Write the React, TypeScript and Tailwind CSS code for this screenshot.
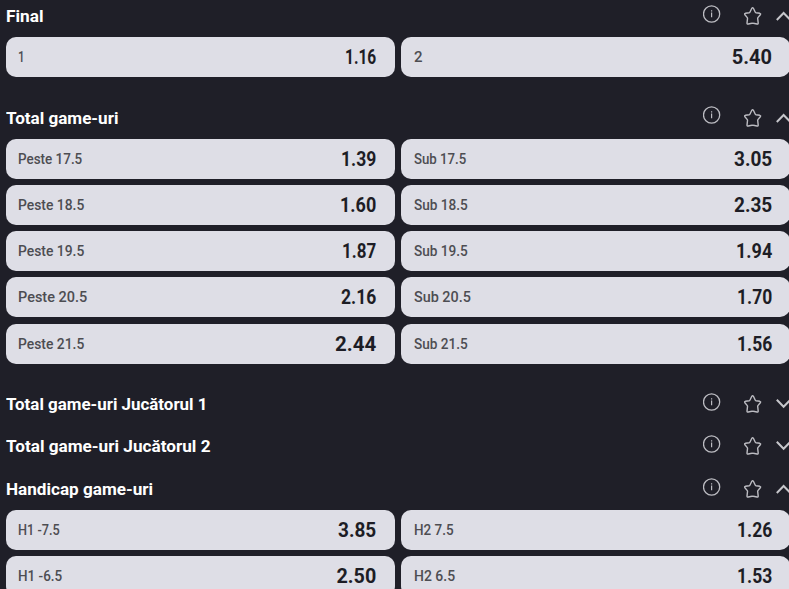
import { useLayoutEffect, useRef, useState } from "react";
import clsx from "clsx";

type Cell = [label: string, labelWidth: number, odds: string, oddsWidth: number];
type Market = { title: string; width: number; open: boolean; header: string; info: string; rows: [Cell, Cell][] };

const markets: Market[] = [
  {
    title: "Final",
    width: 37.5,
    open: true,
    header: "h-[42px]",
    info: "mb-1",
    rows: [[["1", 7, "1.16", 31], ["2", 9, "5.40", 40]]],
  },
  {
    title: "Total game-uri",
    width: 112.5,
    open: true,
    header: "mt-5 h-[42px]",
    info: "mb-1.5",
    rows: [
      [["Peste 17.5", 64.5, "1.39", 35], ["Sub 17.5", 52, "3.05", 38]],
      [["Peste 18.5", 66.5, "1.60", 36], ["Sub 18.5", 53.5, "2.35", 38]],
      [["Peste 19.5", 66.5, "1.87", 34], ["Sub 19.5", 53.5, "1.94", 36]],
      [["Peste 20.5", 69.5, "2.16", 35], ["Sub 20.5", 56.5, "1.70", 35]],
      [["Peste 21.5", 66.5, "2.44", 41], ["Sub 21.5", 53.5, "1.56", 35]],
    ],
  },
  { title: "Total game-uri Jucătorul 1", width: 201, open: false, header: "mt-[19.48px] h-[42px]", info: "mb-1", rows: [] },
  { title: "Total game-uri Jucătorul 2", width: 204, open: false, header: "h-[42px]", info: "mb-1", rows: [] },
  {
    title: "Handicap game-uri",
    width: 147,
    open: true,
    header: "mt-px h-[42px]",
    info: "mb-1",
    rows: [
      [["H1 -7.5", 41.5, "3.85", 38], ["H2 7.5", 39.5, "1.26", 35]],
      [["H1 -6.5", 44, "2.50", 39.5], ["H2 6.5", 41, "1.53", 35]],
    ],
  },
];

/* Condenses a line of text horizontally so that it fills the given width. */
function Fit({ text, width, right = false }: { text: string; width: number; right?: boolean }) {
  const ref = useRef<HTMLSpanElement>(null);
  const [scale, setScale] = useState(1);
  useLayoutEffect(() => {
    if (ref.current) setScale(width / ref.current.offsetWidth);
  }, [width]);
  return (
    <span
      ref={ref}
      className={clsx("inline-block whitespace-nowrap", right ? "origin-right" : "origin-left")}
      style={{ transform: `scaleX(${scale})` }}
    >
      {text}
    </span>
  );
}

function InfoIcon({ className }: { className: string }) {
  return (
    <svg className={clsx("size-[18px] shrink-0", className)} viewBox="0 0 18 18" fill="none" stroke="#bcbcc2">
      <circle cx="8.6" cy="9" r="8.1" strokeWidth="1.3" />
      <path d="M8.6 7.6v4.7M8.6 5.2v1.2" strokeWidth="1.2" />
    </svg>
  );
}

function StarIcon() {
  return (
    <svg
      className="ml-[23px] size-[18px] shrink-0"
      viewBox="0.4 0 18 18"
      fill="none"
      stroke="#bcbcc2"
      strokeWidth="1.4"
      strokeLinejoin="round"
    >
      <path d="M8.2 1.3Q9 .1 9.8 1.3L11.7 5.2Q11.9 5.6 12.4 5.7L16.2 6.3Q17.5 6.7 16.7 7.7L14.3 10.6Q14 11 14.1 11.6L14.6 16.1Q14.6 17.5 13.4 17L9.7 16.3Q9 16.1 8.3 16.3L4.6 17Q3.4 17.5 3.4 16.1L3.9 11.6Q4 11 3.7 10.6L1.3 7.7Q.5 6.7 1.8 6.3L5.6 5.7Q6.1 5.6 6.3 5.2Z" />
    </svg>
  );
}

function Chevron({ open }: { open: boolean }) {
  return (
    <svg className="ml-[14px] h-[10px] w-4 shrink-0" viewBox="0 0 16 10" fill="none" stroke="#c6c6cb" strokeWidth="2">
      <path d={open ? "M.8 9 7.6 2 14.4 9" : "M.8 .8 7.6 7.8 14.4 .8"} />
    </svg>
  );
}

function OddsButton({ cell, second = false }: { cell: Cell; second?: boolean }) {
  const [label, labelWidth, odds, oddsWidth] = cell;
  return (
    <button
      className={clsx(
        "flex h-10 w-[389px] shrink-0 items-center justify-between rounded-[10px] bg-[#dedee6]",
        second ? "pr-[18px] pl-[13px]" : "pr-[19px] pl-3",
      )}
    >
      <span className="text-[15px] leading-5 font-medium text-[#4d4d52]">
        <Fit text={label} width={labelWidth} />
      </span>
      <span className="text-[20px] leading-6 font-bold text-[#1d1d25]">
        <Fit text={odds} width={oddsWidth} right />
      </span>
    </button>
  );
}

export default function App() {
  return (
    <main className="h-[589px] w-[789px] overflow-hidden bg-[#1f1f28] pl-[6px] font-['Roboto',sans-serif]">
      <div className="-mt-[5px]">
        {markets.map((m) => (
          <section key={m.title}>
            <header className={clsx("flex w-[787px] items-center", m.header)}>
              <h2 className="w-[697px] shrink-0 text-[17px] leading-6 font-bold text-white">
                <Fit text={m.title} width={m.width} />
              </h2>
              <InfoIcon className={m.info} />
              <StarIcon />
              <Chevron open={m.open} />
            </header>
            <div className="flex flex-col gap-[6.14px]">
              {m.rows.map((row) => (
                <div key={row[0][0]} className="flex gap-[6px]">
                  <OddsButton cell={row[0]} />
                  <OddsButton cell={row[1]} second />
                </div>
              ))}
            </div>
          </section>
        ))}
      </div>
    </main>
  );
}
